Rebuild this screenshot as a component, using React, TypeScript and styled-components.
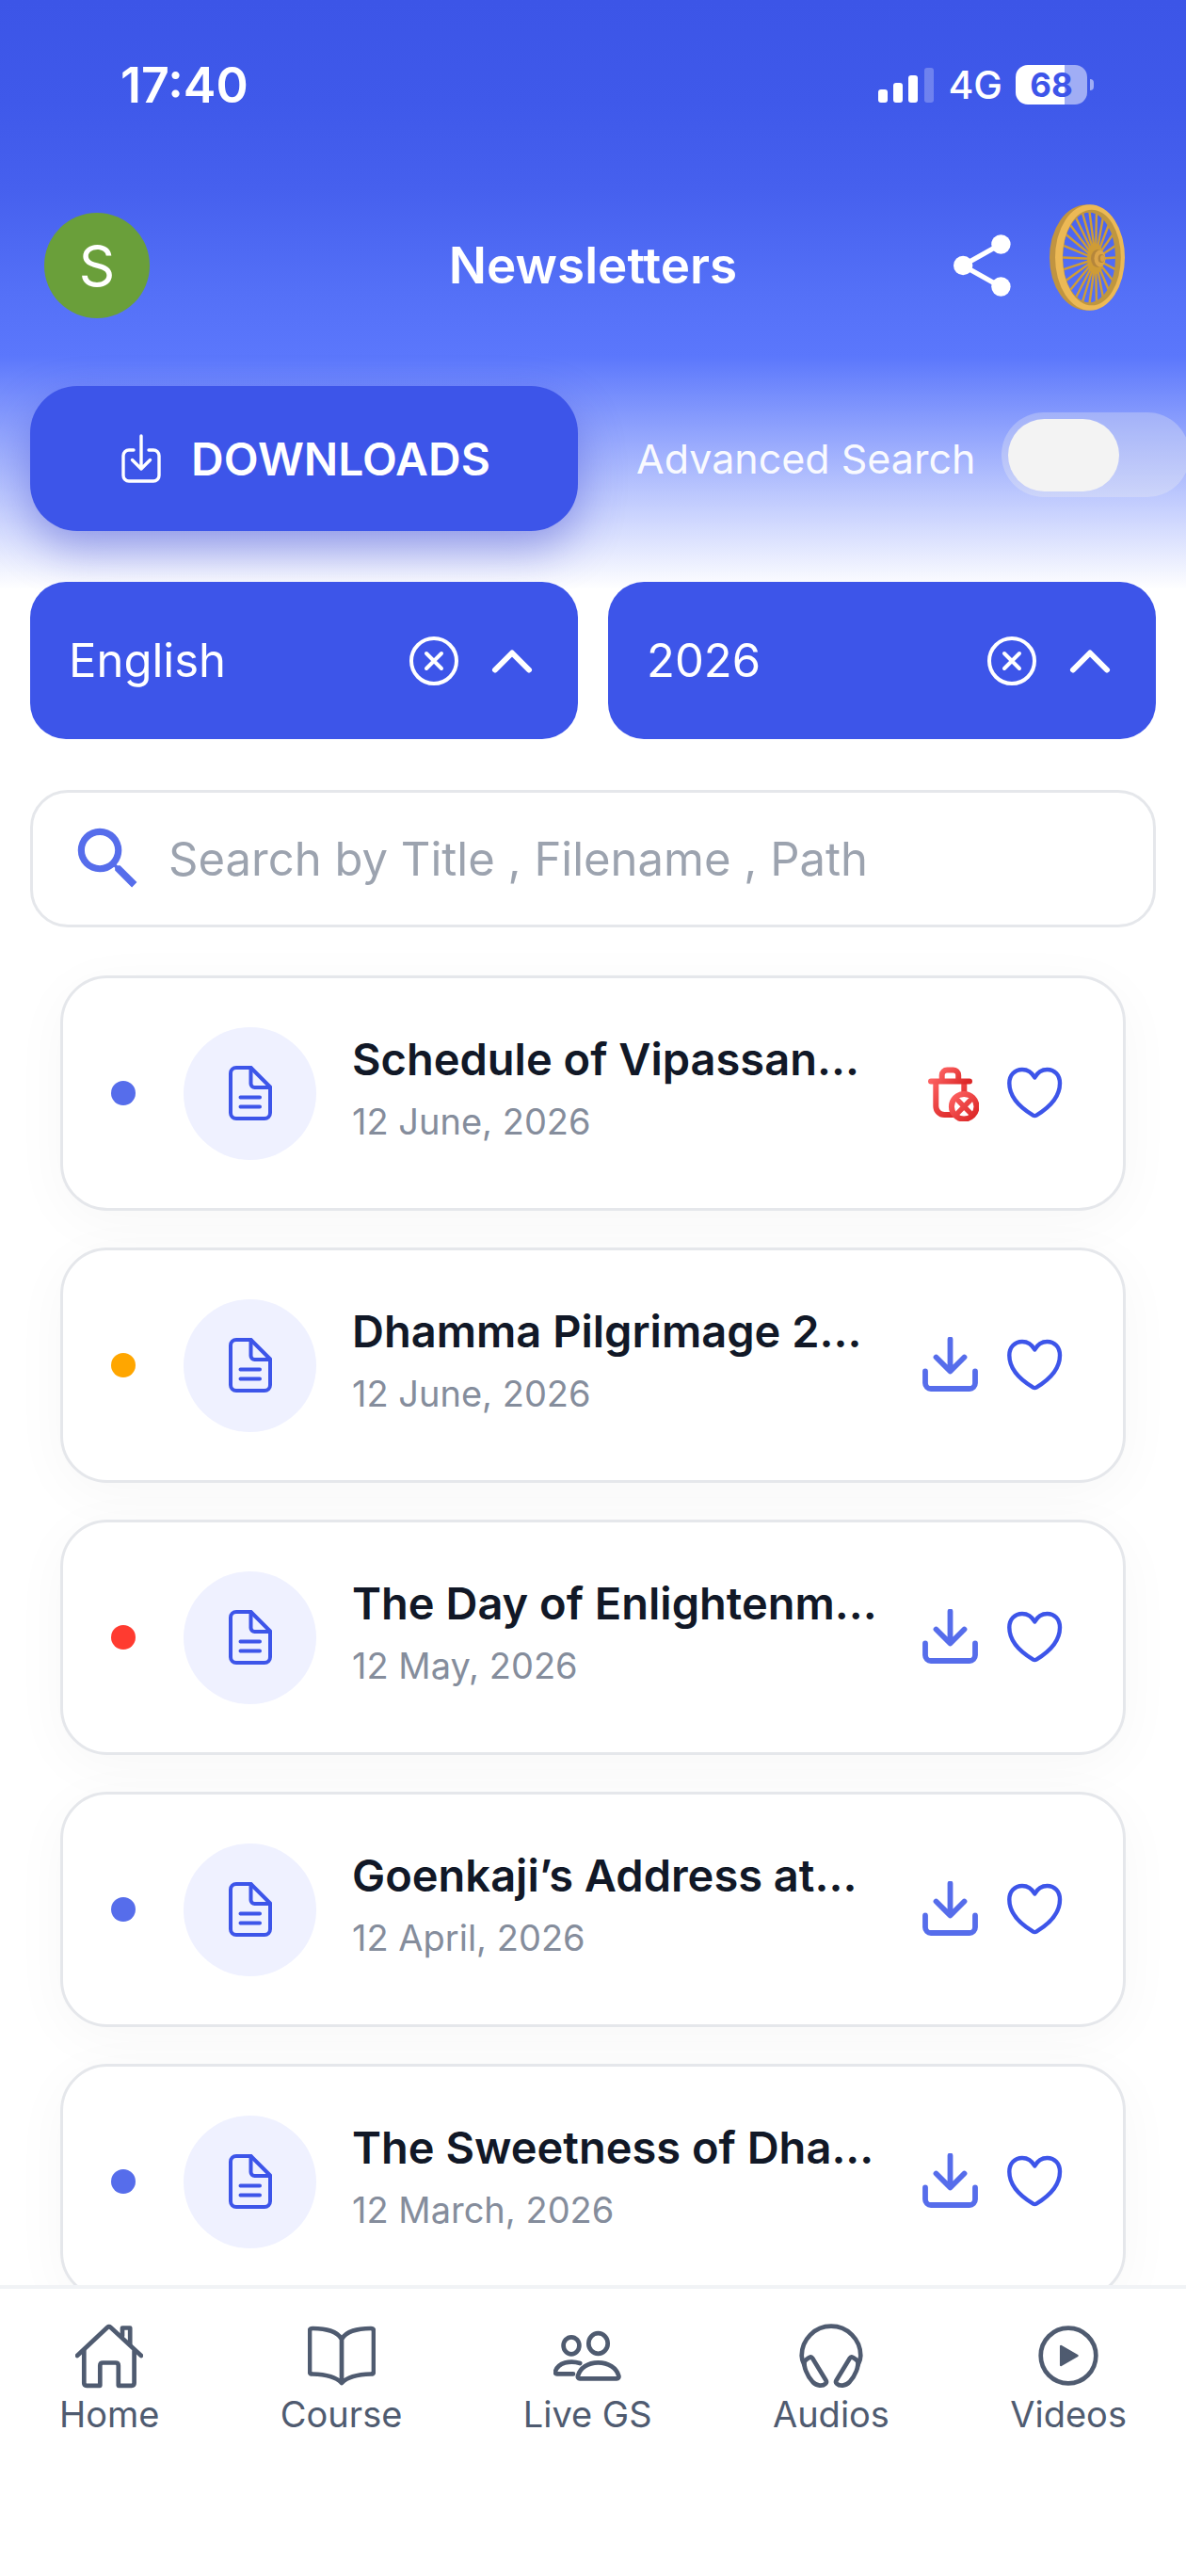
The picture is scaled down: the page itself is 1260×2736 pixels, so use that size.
import React from "react";
import styled, { createGlobalStyle } from "styled-components";
import { MdSearch } from "react-icons/md";

const color = {
  primary: "#3d55e9",
  accent: "#566deb",
  line: "#e5e7eb",
  ink: "#111827",
  muted: "#858d9c",
  nav: "#4f5b70",
};

const GlobalStyle = createGlobalStyle`
  *, *::before, *::after { box-sizing: border-box; }
  body { margin: 0; background: #ffffff; }
  body, button, input, select {
    font-family: Inter, "Noto Sans", "Liberation Sans", sans-serif;
  }
  button { padding: 0; border: 0; background: none; color: inherit; cursor: pointer; }
`;

const Screen = styled.div`
  display: flex;
  flex-direction: column;
  height: 100vh;
  overflow: hidden;
  background: linear-gradient(
      180deg,
      #3c55e7 0,
      #3f59ea 110px,
      #4660ee 200px,
      #5470f7 310px,
      #5b77fc 378px,
      #ffffff 626px
    )
    #ffffff;
`;

/* ---------- status bar ---------- */

const StatusBar = styled.div`
  display: flex;
  flex: none;
  align-items: center;
  justify-content: space-between;
  height: 180px;
  padding: 0 98px 0 128px;
  color: #ffffff;
`;

const Clock = styled.time`
  font-size: 52px;
  font-weight: 600;
`;

const StatusGroup = styled.div`
  display: flex;
  align-items: center;
  gap: 14px;
`;

const Network = styled.span`
  font-size: 41px;
  font-weight: 500;
`;

const Battery = styled.div`
  display: flex;
  align-items: center;
  gap: 3px;
`;

const BatteryLevel = styled.span`
  display: flex;
  align-items: center;
  justify-content: center;
  width: 76px;
  height: 42px;
  border-radius: 13px;
  background: linear-gradient(90deg, #ffffff 68%, #a0adf5 68%);
  color: ${color.primary};
  font-size: 35px;
  font-weight: 700;
`;

const BatteryTip = styled.span`
  width: 4px;
  height: 12px;
  border-radius: 0 6px 6px 0;
  background: #a0adf5;
`;

/* ---------- title bar ---------- */

const TitleBar = styled.header`
  display: grid;
  flex: none;
  grid-template-columns: 1fr auto 1fr;
  align-items: center;
  height: 204px;
  padding: 0 47px;
  color: #ffffff;
`;

const Avatar = styled.button`
  width: 112px;
  height: 112px;
  border-radius: 50%;
  background: #6a9f3a;
  color: #ffffff;
  font-size: 60px;
`;

const Title = styled.h1`
  margin: 0;
  font-size: 53px;
  font-weight: 600;
`;

const TitleActions = styled.div`
  display: flex;
  align-items: center;
  justify-content: flex-end;
  gap: 40px;
  padding-right: 18px;
`;

const IconButton = styled.button`
  display: flex;
  flex: none;
`;

/* ---------- controls ---------- */

const Controls = styled.section`
  display: grid;
  flex: none;
  grid-template-columns: minmax(0, 1fr) minmax(0, 1fr);
  column-gap: 32px;
  row-gap: 54px;
  padding: 26px 32px 0;
`;

const DownloadsButton = styled.button`
  display: flex;
  align-items: center;
  justify-content: center;
  gap: 32px;
  height: 154px;
  padding: 0 28px 0 32px;
  border-radius: 50px;
  background: ${color.primary};
  box-shadow: 0 20px 48px rgba(50, 60, 200, 0.42);
  color: #ffffff;
  font-size: 48px;
  font-weight: 600;
`;

const AdvancedSearch = styled.label`
  display: flex;
  align-items: center;
  gap: 28px;
  padding-left: 30px;
  color: rgba(255, 255, 255, 0.95);
  font-size: 43px;
  white-space: nowrap;
`;

const Toggle = styled.input`
  appearance: none;
  flex: none;
  display: flex;
  align-items: center;
  width: 200px;
  height: 90px;
  margin: 0 0 8px;
  padding: 0 7px;
  border-radius: 45px;
  background: rgba(240, 240, 240, 0.29);
  cursor: pointer;

  &::before {
    content: "";
    width: 118px;
    height: 77px;
    border-radius: 39px;
    background: #f3f3f3;
  }

  &:checked {
    justify-content: flex-end;
  }
`;

const FilterBox = styled.div`
  display: flex;
  align-items: center;
  height: 167px;
  padding: 0 43px 0 41px;
  border-radius: 38px;
  background: ${color.primary};
  color: #ffffff;
`;

const FilterSelect = styled.select`
  appearance: none;
  flex: 1;
  min-width: 0;
  height: 100%;
  padding: 0;
  border: 0;
  background: none;
  color: #ffffff;
  font-size: 49px;

  option {
    color: ${color.ink};
  }
`;

const FilterIcons = styled.div`
  display: flex;
  align-items: center;
  gap: 29px;
`;

const SearchBox = styled.label`
  display: flex;
  grid-column: 1 / -1;
  align-items: center;
  gap: 21px;
  height: 146px;
  padding: 0 37px;
  border: 3px solid ${color.line};
  border-radius: 40px;
  background: #ffffff;
  color: ${color.accent};
`;

const SearchInput = styled.input`
  flex: 1;
  min-width: 0;
  height: 100%;
  padding: 0;
  border: 0;
  outline: none;
  background: none;
  color: ${color.ink};
  font-size: 49px;

  &::placeholder {
    color: #9ca3af;
    opacity: 1;
  }
`;

/* ---------- list ---------- */

const List = styled.ul`
  display: flex;
  flex: 1;
  flex-direction: column;
  gap: 39px;
  min-height: 0;
  margin: 0;
  padding: 51px 64px;
  overflow-y: auto;
  list-style: none;
  scrollbar-width: none;
`;

const Card = styled.li`
  display: flex;
  flex: none;
  align-items: center;
  height: 250px;
  padding: 0 64px 0 51px;
  border: 3px solid ${color.line};
  border-radius: 50px;
  background: #ffffff;
  box-shadow: 0 12px 60px rgba(0, 0, 0, 0.035);
`;

const Dot = styled.span<{ $tone: string }>`
  flex: none;
  width: 26px;
  height: 26px;
  margin-right: 51px;
  border-radius: 50%;
  background: ${(p) => p.$tone};
`;

const FileBadge = styled.span`
  display: flex;
  flex: none;
  align-items: center;
  justify-content: center;
  width: 141px;
  height: 141px;
  border-radius: 50%;
  background: #eff1ff;
  color: ${color.primary};
`;

const CardText = styled.div`
  flex: 1;
  min-width: 0;
  padding-left: 38px;
  white-space: nowrap;
`;

const CardTitle = styled.h2`
  margin: 0;
  color: ${color.ink};
  font-size: 47px;
  font-weight: 600;
  line-height: 60px;
`;

const CardDate = styled.p`
  margin: 0;
  color: ${color.muted};
  font-size: 38px;
  line-height: 72px;
`;

const CardActions = styled.div`
  display: flex;
  align-items: center;
  gap: 29px;
`;

/* ---------- bottom navigation ---------- */

const BottomNav = styled.nav`
  display: flex;
  flex: none;
  align-items: flex-start;
  justify-content: space-between;
  height: 309px;
  padding: 35px 63px 0;
  border-top: 4px solid #f1f3f6;
  background: #ffffff;
`;

const NavLink = styled.a`
  display: flex;
  flex-direction: column;
  align-items: center;
  gap: 2px;
  color: ${color.nav};
  font-size: 38px;
  line-height: 48px;
  text-decoration: none;
`;

/* ---------- icons ---------- */

const SignalIcon = () => (
  <svg width="60" height="38" viewBox="0 0 60 38" fill="currentColor" aria-hidden="true">
    <rect x="0" y="24" width="10" height="14" rx="3" />
    <rect x="16" y="17" width="10" height="21" rx="3" />
    <rect x="32" y="9" width="10" height="29" rx="3" />
    <rect x="49" y="1" width="10" height="37" rx="3" opacity="0.25" />
  </svg>
);

const ShareIcon = () => (
  <svg width="62" height="66" viewBox="0 0 62 66" aria-hidden="true">
    <path d="M50 10.5 10 33l40 22.5" fill="none" stroke="currentColor" strokeWidth="5.4" />
    <g fill="currentColor">
      <circle cx="10.2" cy="33" r="10.2" />
      <circle cx="50.4" cy="10.5" r="10.2" />
      <circle cx="50.4" cy="55.5" r="10.2" />
    </g>
  </svg>
);

const ellipse = (cx: number, cy: number, rx: number, ry: number) =>
  `M${cx - rx} ${cy}a${rx} ${ry} 0 1 0 ${rx * 2} 0a${rx} ${ry} 0 1 0 ${-rx * 2} 0Z`;

const spokes = Array.from({ length: 24 }, (_, i) => {
  const a = (i * Math.PI) / 12;
  return `M49 58L${(42.5 + 28.5 * Math.cos(a)).toFixed(1)} ${(56.5 + 48.5 * Math.sin(a)).toFixed(1)}`;
}).join("");

const WheelIcon = () => (
  <svg width="80" height="130" viewBox="0 0 80 130" aria-hidden="true">
    <path d={spokes} stroke="#cf9c35" strokeWidth="2.4" />
    <ellipse cx="49" cy="58" rx="9" ry="16" fill="#cf9c35" />
    <g fillRule="evenodd">
      <path d={ellipse(39, 56.5, 39, 56) + ellipse(42.3, 56.5, 28.3, 48)} fill="#c19440" />
      <path d={ellipse(45, 56.5, 32, 52) + ellipse(42, 56.5, 28, 48)} fill="#bf963f" />
      <path d={ellipse(43, 56.5, 37, 56.3) + ellipse(44.8, 56.5, 31, 50.8)} fill="#ecb955" />
    </g>
    <ellipse cx="51" cy="57.5" rx="7" ry="9.5" fill="#b5863b" />
    <ellipse cx="53.5" cy="57.5" rx="6" ry="9" fill="#dba548" />
    <ellipse cx="55" cy="57.5" rx="3.4" ry="4.6" fill="#b5863b" />
    <ellipse cx="56.2" cy="57.5" rx="2.2" ry="3.4" fill="#d9a245" />
  </svg>
);

const TrayIcon = () => (
  <svg width="42" height="52" viewBox="0 0 42 52" fill="none" stroke="currentColor" strokeWidth="3.4" strokeLinecap="round" strokeLinejoin="round" aria-hidden="true">
    <path d="M13 17H8a6 6 0 0 0-6 6v21a6 6 0 0 0 6 6h26a6 6 0 0 0 6-6V23a6 6 0 0 0-6-6h-5" />
    <path d="M21 2v35M11.500 27.500 21 37l9.500-9.500" />
  </svg>
);

const ClearIcon = () => (
  <svg width="54" height="54" viewBox="0 0 54 54" fill="none" stroke="currentColor" strokeWidth="4" strokeLinecap="round" aria-hidden="true">
    <circle cx="27" cy="27" r="24" />
    <path d="m19 19 16 16M35 19l-16 16" />
  </svg>
);

const ChevronIcon = () => (
  <svg width="54" height="54" viewBox="0 0 54 54" fill="none" stroke="currentColor" strokeWidth="6" strokeLinecap="round" strokeLinejoin="round" aria-hidden="true">
    <path d="M9 36.500 27 18.500l18 18" />
  </svg>
);

const FileIcon = () => (
  <svg width="46" height="58" viewBox="0 0 46 58" fill="none" stroke="currentColor" strokeWidth="4" strokeLinecap="round" strokeLinejoin="round" aria-hidden="true">
    <path d="M23.500 2H8a6 6 0 0 0-6 6v42a6 6 0 0 0 6 6h30a6 6 0 0 0 6-6V22.500Z" />
    <path d="M23.500 2v17a4 4 0 0 0 4 4H44M12.500 33.500h20.500M12.500 43.500h20.500" />
  </svg>
);

const TrashIcon = () => (
  <svg width="60" height="60" viewBox="0 0 60 60" fill="none" aria-hidden="true">
    <defs>
      <linearGradient id="trash-body" gradientUnits="userSpaceOnUse" x1="12" y1="10" x2="44" y2="48">
        <stop offset="0" stopColor="#ff6666" />
        <stop offset="1" stopColor="#dc2828" />
      </linearGradient>
      <linearGradient id="trash-lid" gradientUnits="userSpaceOnUse" x1="16" y1="4" x2="40" y2="26">
        <stop offset="0" stopColor="#ff6666" />
        <stop offset="1" stopColor="#dc2828" />
      </linearGradient>
      <linearGradient id="trash-cross" gradientUnits="userSpaceOnUse" x1="32" y1="32" x2="56" y2="56">
        <stop offset="0" stopColor="#fc5f5f" />
        <stop offset="1" stopColor="#dc2828" />
      </linearGradient>
    </defs>
    <g strokeWidth="6" strokeLinecap="round">
      <path d="M14.300 18v26a9 9 0 0 0 9 9H32M44.300 18v12" stroke="url(#trash-body)" />
      <path d="M9 17.400h41M20.700 17V11a5.500 5.500 0 0 1 5.500-5.500h6.500a5.500 5.500 0 0 1 5.500 5.500v6" stroke="url(#trash-lid)" />
      <circle cx="44.200" cy="44.300" r="13.300" fill="#ffffff" stroke="url(#trash-cross)" />
      <path d="m38 38 12.400 12.600M50.400 38 38 50.600" strokeWidth="5.4" stroke="url(#trash-cross)" />
    </g>
  </svg>
);

const DownloadIcon = () => (
  <svg width="60" height="60" viewBox="0 0 60 60" fill="none" stroke={color.accent} strokeWidth="5.8" strokeLinecap="round" strokeLinejoin="round" aria-hidden="true">
    <path d="M29.500 2.500V36M14.500 21.500l15 15 15-15" />
    <path d="M3 36.500V49a6 6 0 0 0 6 6h41a6 6 0 0 0 6-6V36.500" />
  </svg>
);

const HeartIcon = () => (
  <svg width="60" height="60" viewBox="0 0 60 60" fill="none" stroke={color.primary} strokeWidth="4.4" strokeLinejoin="round" aria-hidden="true">
    <path d="M30.300 13.500C27.500 8.500 22.800 5 17 5 9 5 3.300 11 3.300 19.500 3.300 34 15 45.500 28.600 53.600q1.700 1 3.400 0C45.500 45.500 57 34 57 19.500 57 11 51.500 5 43.500 5c-5.800 0-10.500 3.500-13.200 8.500Z" />
  </svg>
);

const NavGlyph = ({ children }: { children: React.ReactNode }) => (
  <svg width="72" height="72" viewBox="0 0 72 72" fill="none" stroke="currentColor" strokeWidth="4.7" strokeLinecap="round" strokeLinejoin="round" aria-hidden="true">
    {children}
  </svg>
);

const HomeIcon = () => (
  <NavGlyph>
    <path d="M2 36 34 6q1.800-1.600 3.600 0L70 36" />
    <path d="M9.300 30v35q0 2.800 2.800 2.800h14.200V46.500q0-3 3-3h13.500q3 0 3 3v21.300h14q2.800 0 2.800-2.800V31" />
    <path d="M50 15V6.500h8.200V24" />
  </NavGlyph>
);

const CourseIcon = () => (
  <NavGlyph>
    <path d="M36 18.500C31 9.500 19.500 7.300 5 7q-3 0-3 3v42.500q0 3 3 3C19 55.800 29.500 58 36 65c6.500-7 17-9.200 31-9.500q3 0 3-3V10q0-3-3-3C52.500 7.300 41 9.500 36 18.500ZM36 18.500V65" />
  </NavGlyph>
);

const PeopleIcon = () => (
  <NavGlyph>
    <ellipse cx="19" cy="25.300" rx="8.400" ry="9" />
    <ellipse cx="47.500" cy="23" rx="10.200" ry="10.900" />
    <path d="M47.500 43.300c11 0 19.500 6 21.800 14 .5 1.800-.4 3-2 3H28c-1.700 0-2.500-1.200-2-3 2.200-8 10.500-14 21.500-14Z" />
    <path d="M28.200 44C17.500 40.500 5 43.500 1.900 52.800c-.5 1.600.3 2.600 1.800 2.600H21" />
  </NavGlyph>
);

const HeadphonesIcon = () => (
  <NavGlyph>
    <path d="M7.500 46C5.500 42 4.700 39 4.700 36a31.300 31.300 0 0 1 62.600 0c0 3-.8 6-2.800 10" />
    <path d="M7.800 42c1.500-2 3.500-3 5-4 1.500-.9 2.600-.5 3.400.8l14.300 23.400c.8 1.300.6 2.400-.5 3.500C27 68.500 21 68.500 16.500 64 10 57 6.500 47 7.800 42Z" />
    <path d="M64.200 42c-1.500-2-3.500-3-5-4-1.500-.9-2.600-.5-3.400.8L41.500 62.200c-.8 1.300-.6 2.400.5 3.500 3 2.800 9 2.800 13.500-1.700 6.500-7 10-17 8.700-22Z" />
  </NavGlyph>
);

const PlayIcon = () => (
  <NavGlyph>
    <circle cx="36" cy="36" r="29.300" />
    <path d="M28.200 26v20L45.500 36Z" fill="currentColor" strokeWidth="2.500" />
  </NavGlyph>
);

/* ---------- data ---------- */

const issues = [
  { title: "Schedule of Vipassan...", date: "12 June, 2026", tone: color.accent, saved: true },
  { title: "Dhamma Pilgrimage 2...", date: "12 June, 2026", tone: "#ffa600", saved: false },
  { title: "The Day of Enlightenm...", date: "12 May, 2026", tone: "#ff3b30", saved: false },
  { title: "Goenkaji’s Address at...", date: "12 April, 2026", tone: color.accent, saved: false },
  { title: "The Sweetness of Dha...", date: "12 March, 2026", tone: color.accent, saved: false },
];

const tabs = [
  { label: "Home", Icon: HomeIcon },
  { label: "Course", Icon: CourseIcon },
  { label: "Live GS", Icon: PeopleIcon },
  { label: "Audios", Icon: HeadphonesIcon },
  { label: "Videos", Icon: PlayIcon },
];

const Filter = ({ label, value }: { label: string; value: string }) => (
  <FilterBox>
    <FilterSelect aria-label={label} defaultValue={value}>
      <option value={value}>{value}</option>
    </FilterSelect>
    <FilterIcons>
      <IconButton type="button" aria-label={`Clear ${label}`}>
        <ClearIcon />
      </IconButton>
      <ChevronIcon />
    </FilterIcons>
  </FilterBox>
);

export default function App() {
  return (
    <>
      <GlobalStyle />
      <Screen>
        <StatusBar>
          <Clock>17:40</Clock>
          <StatusGroup>
            <SignalIcon />
            <Network>4G</Network>
            <Battery>
              <BatteryLevel>68</BatteryLevel>
              <BatteryTip />
            </Battery>
          </StatusGroup>
        </StatusBar>

        <TitleBar>
          <Avatar type="button">S</Avatar>
          <Title>Newsletters</Title>
          <TitleActions>
            <IconButton type="button" aria-label="Share">
              <ShareIcon />
            </IconButton>
            <WheelIcon />
          </TitleActions>
        </TitleBar>

        <Controls>
          <DownloadsButton type="button">
            <TrayIcon />
            DOWNLOADS
          </DownloadsButton>
          <AdvancedSearch>
            Advanced Search
            <Toggle type="checkbox" role="switch" />
          </AdvancedSearch>
          <Filter label="language" value="English" />
          <Filter label="year" value="2026" />
          <SearchBox>
            <MdSearch size={86} aria-hidden="true" />
            <SearchInput type="text" aria-label="Search newsletters" placeholder="Search by Title , Filename , Path" />
          </SearchBox>
        </Controls>

        <List>
          {issues.map((issue) => (
            <Card key={issue.title}>
              <Dot $tone={issue.tone} />
              <FileBadge>
                <FileIcon />
              </FileBadge>
              <CardText>
                <CardTitle>{issue.title}</CardTitle>
                <CardDate>{issue.date}</CardDate>
              </CardText>
              <CardActions>
                <IconButton type="button" aria-label={issue.saved ? "Remove download" : "Download"}>
                  {issue.saved ? <TrashIcon /> : <DownloadIcon />}
                </IconButton>
                <IconButton type="button" aria-label="Favourite">
                  <HeartIcon />
                </IconButton>
              </CardActions>
            </Card>
          ))}
        </List>

        <BottomNav>
          {tabs.map(({ label, Icon }) => (
            <NavLink href="#" key={label}>
              <Icon />
              {label}
            </NavLink>
          ))}
        </BottomNav>
      </Screen>
    </>
  );
}
